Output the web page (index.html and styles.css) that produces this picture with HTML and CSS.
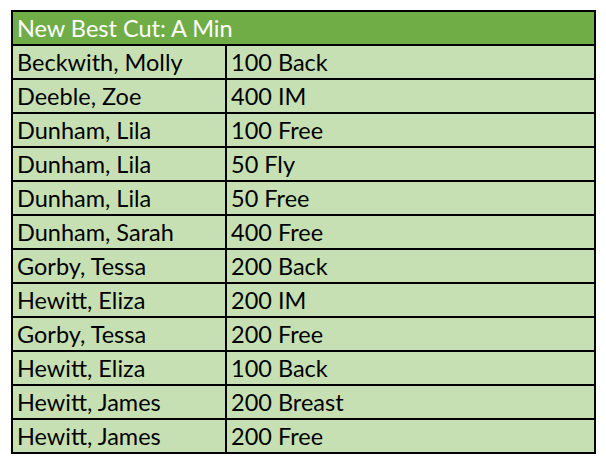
FILE: index.html
```html
<!DOCTYPE html>
<html>
<head>
<meta charset="utf-8">
<link rel="stylesheet" href="styles.css">
</head>
<body>
<table class="cuts">
  <colgroup>
    <col class="col-name">
    <col class="col-event">
  </colgroup>
  <thead>
    <tr><th colspan="2" class="title">New Best Cut: A Min</th></tr>
  </thead>
  <tbody>
    <tr><td>Beckwith, Molly</td><td>100 Back</td></tr>
    <tr><td>Deeble, Zoe</td><td>400 IM</td></tr>
    <tr><td>Dunham, Lila</td><td>100 Free</td></tr>
    <tr><td>Dunham, Lila</td><td>50 Fly</td></tr>
    <tr><td>Dunham, Lila</td><td>50 Free</td></tr>
    <tr><td>Dunham, Sarah</td><td>400 Free</td></tr>
    <tr><td>Gorby, Tessa</td><td>200 Back</td></tr>
    <tr><td>Hewitt, Eliza</td><td>200 IM</td></tr>
    <tr><td>Gorby, Tessa</td><td>200 Free</td></tr>
    <tr><td>Hewitt, Eliza</td><td>100 Back</td></tr>
    <tr><td>Hewitt, James</td><td>200 Breast</td></tr>
    <tr><td>Hewitt, James</td><td>200 Free</td></tr>
  </tbody>
</table>
</body>
</html>
```
FILE: styles.css
```css
html, body {
  margin: 0;
  padding: 0;
  background: #ffffff;
}
body {
  padding: 10px 0 0 11px;
  font-family: "Lato", "Liberation Sans", sans-serif;
  font-size: 23.5px;
  color: #000000;
}
.cuts {
  border-collapse: collapse;
  width: 585px;
  table-layout: fixed;
}
.col-name {
  width: 214px;
}
.cuts th,
.cuts td {
  border: 2px solid #000000;
  padding: 0 0 0 4px;
  height: 32px;
  text-align: left;
  vertical-align: middle;
  line-height: 26px;
  white-space: nowrap;
}
.cuts .title {
  background: #70ad47;
  color: #ffffff;
  font-weight: normal;
}
.cuts td {
  background: #c6e0b4;
}
```
